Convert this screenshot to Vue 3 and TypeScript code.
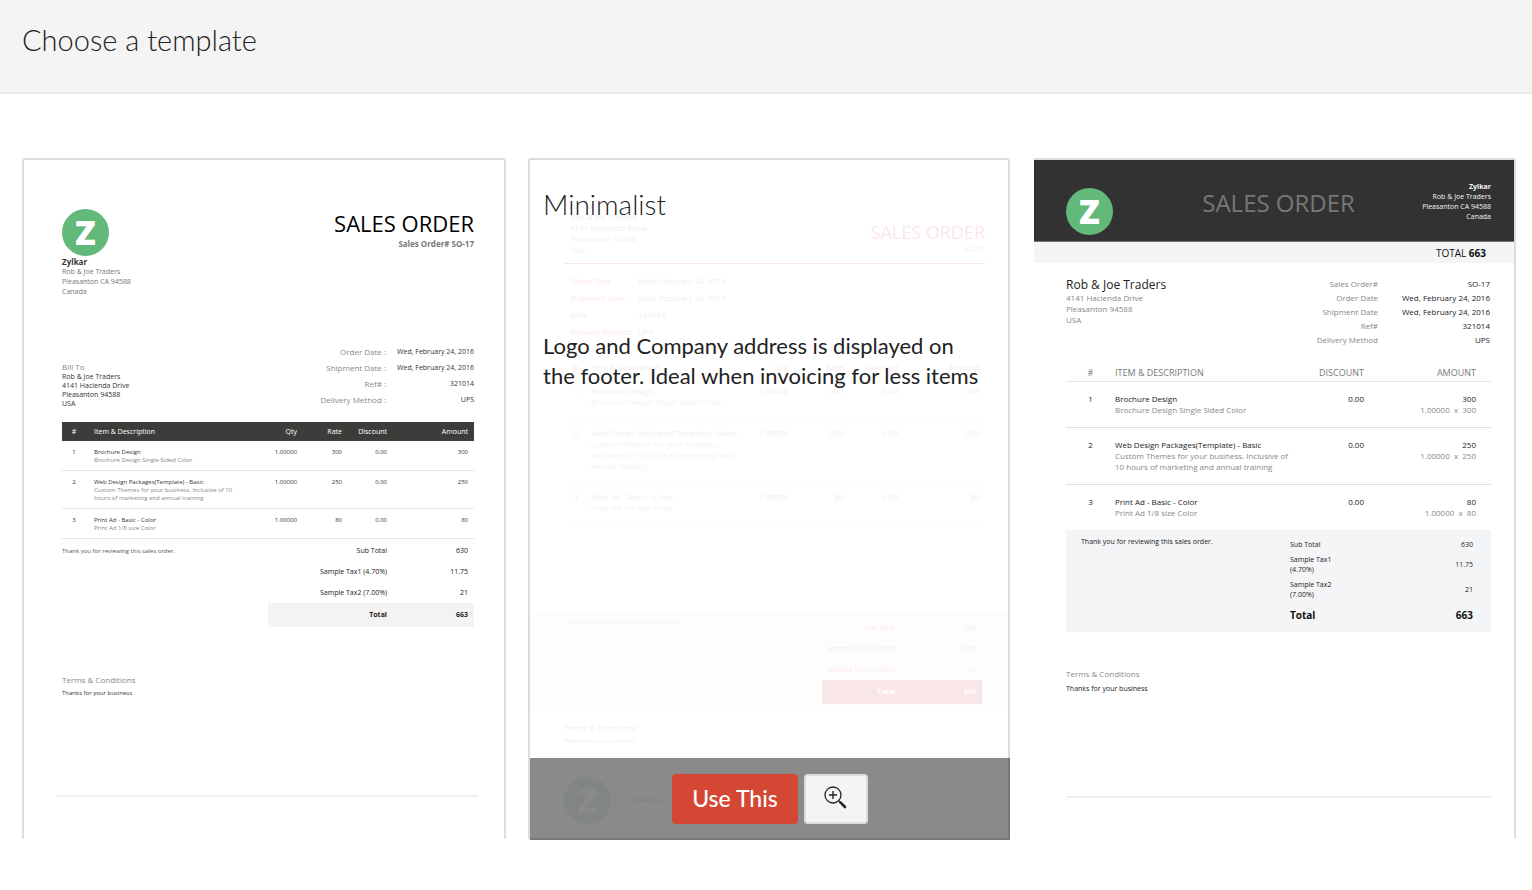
<script setup lang="ts">
interface Item {
  name: string
  text: string
  qty: string
  rate: string
  discount: string
}

interface Pair {
  label: string
  value: string
}

const items: Item[] = [
  { name: 'Brochure Design', text: 'Brochure Design Single Sided Color', qty: '1.00000', rate: '300', discount: '0.00' },
  {
    name: 'Web Design Packages(Template) - Basic',
    text: 'Custom Themes for your business. Inclusive of 10 hours of marketing and annual training',
    qty: '1.00000',
    rate: '250',
    discount: '0.00',
  },
  { name: 'Print Ad - Basic - Color', text: 'Print Ad 1/8 size Color', qty: '1.00000', rate: '80', discount: '0.00' },
]

const meta: Pair[] = [
  { label: 'Order Date', value: 'Wed, February 24, 2016' },
  { label: 'Shipment Date', value: 'Wed, February 24, 2016' },
  { label: 'Ref#', value: '321014' },
  { label: 'Delivery Method', value: 'UPS' },
]

const metaWithNumber: Pair[] = [{ label: 'Sales Order#', value: 'SO-17' }, ...meta]

const totals: Pair[] = [
  { label: 'Sub Total', value: '630' },
  { label: 'Sample Tax1 (4.70%)', value: '11.75' },
  { label: 'Sample Tax2 (7.00%)', value: '21' },
]

const company: string[] = ['Rob & Joe Traders', 'Pleasanton CA 94588', 'Canada']
const address: string[] = ['4141 Hacienda Drive', 'Pleasanton 94588', 'USA']
</script>

<template>
  <div class="page">
    <header class="page-head">
      <h1>Choose a template</h1>
    </header>

    <main class="gallery">
      <article class="card standard">
        <div class="doc">
          <div class="top">
            <div>
              <div class="logo">Z</div>
              <p class="company">Zylkar</p>
              <p v-for="line in company" :key="line" class="company-line">{{ line }}</p>
            </div>
            <div class="heading">
              <h2>SALES ORDER</h2>
              <p>Sales Order# SO-17</p>
            </div>
          </div>
          <div class="parties">
            <div class="bill">
              <p class="bill-label">Bill To</p>
              <p>Rob &amp; Joe Traders</p>
              <p v-for="line in address" :key="line">{{ line }}</p>
            </div>
            <dl class="meta">
              <template v-for="row in meta" :key="row.label">
                <dt>{{ row.label }} :</dt>
                <dd>{{ row.value }}</dd>
              </template>
            </dl>
          </div>
          <table>
            <thead>
              <tr>
                <th class="num">#</th>
                <th class="item">Item &amp; Description</th>
                <th class="qty">Qty</th>
                <th class="rate">Rate</th>
                <th class="disc">Discount</th>
                <th class="amount">Amount</th>
              </tr>
            </thead>
            <tbody>
              <tr v-for="(item, i) in items" :key="item.name">
                <td class="num">{{ i + 1 }}</td>
                <td class="item">{{ item.name }}<p>{{ item.text }}</p></td>
                <td class="qty">{{ item.qty }}</td>
                <td class="rate">{{ item.rate }}</td>
                <td class="disc">{{ item.discount }}</td>
                <td class="amount">{{ item.rate }}</td>
              </tr>
            </tbody>
          </table>
          <div class="summary">
            <p class="note">Thank you for reviewing this sales order.</p>
            <dl class="totals">
              <div v-for="row in totals" :key="row.label">
                <dt>{{ row.label }}</dt>
                <dd>{{ row.value }}</dd>
              </div>
              <div class="grand">
                <dt>Total</dt>
                <dd>663</dd>
              </div>
            </dl>
          </div>
          <div class="terms">
            <h3>Terms &amp; Conditions</h3>
            <p>Thanks for your business</p>
          </div>
          <hr />
        </div>
      </article>

      <article class="card minimalist">
        <div class="doc">
          <div class="top">
            <div class="bill">
              <p class="accent">Bill To</p>
              <p>Rob &amp; Joe Traders</p>
              <p v-for="line in address" :key="line">{{ line }}</p>
            </div>
            <div class="heading">
              <h2>SALES ORDER</h2>
              <p>SO-17</p>
            </div>
          </div>
          <dl class="meta">
            <template v-for="row in meta" :key="row.label">
              <dt>{{ row.label }}</dt>
              <dd>{{ row.value }}</dd>
            </template>
          </dl>
          <table>
            <thead>
              <tr>
                <th class="num">#</th>
                <th class="item">Item &amp; Description</th>
                <th class="qty">Qty</th>
                <th class="rate">Rate</th>
                <th class="disc">Discount</th>
                <th class="amount">Amount</th>
              </tr>
            </thead>
            <tbody>
              <tr v-for="(item, i) in items" :key="item.name">
                <td class="num">{{ i + 1 }}</td>
                <td class="item">{{ item.name }}<p>{{ item.text }}</p></td>
                <td class="qty">{{ item.qty }}</td>
                <td class="rate">{{ item.rate }}</td>
                <td class="disc">{{ item.discount }}</td>
                <td class="amount">{{ item.rate }}</td>
              </tr>
            </tbody>
          </table>
          <div class="summary">
            <p class="note">Thank you for reviewing this sales order.</p>
            <dl class="totals">
              <div v-for="row in totals" :key="row.label">
                <dt>{{ row.label }}</dt>
                <dd>{{ row.value }}</dd>
              </div>
              <div class="grand">
                <dt>Total</dt>
                <dd>663</dd>
              </div>
            </dl>
          </div>
          <div class="terms">
            <h3>Terms &amp; Conditions</h3>
            <p>Thanks for your business</p>
          </div>
          <div class="doc-foot">
            <div class="logo">Z</div>
            <p><b>Zylkar</b> Rob &amp; J</p>
          </div>
        </div>
        <div class="cover">
          <h2>Minimalist</h2>
          <p>Logo and Company address is displayed on the footer. Ideal when invoicing for less items</p>
        </div>
        <div class="actions">
          <button type="button" class="use">Use This</button>
          <button type="button" class="preview" aria-label="Preview">
            <svg width="24" height="24" viewBox="0 0 24 24" fill="none" stroke="#222" aria-hidden="true">
              <circle cx="9" cy="9" r="8" stroke-width="1.3" />
              <path d="M5 9h8M9 5v8" stroke-width="1.4" />
              <path d="M14.7 14.7l2 2" stroke-width="1.4" />
              <path d="M16.4 16.4l4.6 4.6" stroke-width="2.6" stroke-linecap="round" />
            </svg>
          </button>
        </div>
      </article>

      <article class="card elite">
        <div class="doc">
          <div class="banner">
            <div class="logo">Z</div>
            <h2>SALES ORDER</h2>
            <div class="sender">
              <p class="company">Zylkar</p>
              <p v-for="line in company" :key="line">{{ line }}</p>
            </div>
          </div>
          <p class="total-band">TOTAL <b>663</b></p>
          <div class="sheet">
            <div class="parties">
              <div class="bill">
                <p class="client">Rob &amp; Joe Traders</p>
                <p v-for="line in address" :key="line">{{ line }}</p>
              </div>
              <dl class="meta">
                <template v-for="row in metaWithNumber" :key="row.label">
                  <dt>{{ row.label }}</dt>
                  <dd>{{ row.value }}</dd>
                </template>
              </dl>
            </div>
            <table>
              <thead>
                <tr>
                  <th class="num">#</th>
                  <th class="item">ITEM &amp; DESCRIPTION</th>
                  <th class="disc">DISCOUNT</th>
                  <th class="amount">AMOUNT</th>
                </tr>
              </thead>
              <tbody>
                <tr v-for="(item, i) in items" :key="item.name">
                  <td class="num">{{ i + 1 }}</td>
                  <td class="item">{{ item.name }}<p>{{ item.text }}</p></td>
                  <td class="disc">{{ item.discount }}</td>
                  <td class="amount">{{ item.rate }}<p>{{ item.qty }}&nbsp; x &nbsp;{{ item.rate }}</p></td>
                </tr>
              </tbody>
            </table>
            <div class="summary">
              <p class="note">Thank you for reviewing this sales order.</p>
              <dl class="totals">
                <div v-for="row in totals" :key="row.label">
                  <dt>{{ row.label }}</dt>
                  <dd>{{ row.value }}</dd>
                </div>
                <div class="grand">
                  <dt>Total</dt>
                  <dd>663</dd>
                </div>
              </dl>
            </div>
            <div class="terms">
              <h3>Terms &amp; Conditions</h3>
              <p>Thanks for your business</p>
            </div>
            <hr />
          </div>
        </div>
      </article>
    </main>
  </div>
</template>

<style>
body {
  margin: 0;
  background: #fff;
}
</style>

<style scoped>
.page {
  font-family: Lato, "Open Sans", sans-serif;
  color: #222;
}

h1,
h2,
h3,
p,
dl,
dd,
hr {
  margin: 0;
  font-weight: 400;
}

.page-head {
  padding: 22px 22px 34px;
  background: #f4f4f4;
  border-bottom: 2px solid #ececec;
}

.page-head h1 {
  font-size: 29px;
  line-height: 36px;
  font-weight: 300;
}

.gallery {
  display: grid;
  grid-template-columns: minmax(0, 242fr) minmax(0, 241fr) minmax(0, 242fr);
  gap: 22px;
  padding: 64px 16px 50px 22px;
}

.card {
  position: relative;
  border: 2px solid #dcdcdc;
  border-bottom-color: transparent;
  border-radius: 3px;
}

.doc {
  font-family: "Open Sans", "Noto Sans", sans-serif;
  font-size: 8px;
  line-height: 11px;
  color: #333;
}

.logo {
  width: 47px;
  height: 47px;
  border-radius: 50%;
  background: #62b97a;
  color: #fff;
  font-size: 34px;
  line-height: 46px;
  font-weight: 800;
  text-align: center;
}

.top,
.parties,
.summary {
  display: flex;
  justify-content: space-between;
}

.heading {
  text-align: right;
}

table {
  width: 100%;
  table-layout: fixed;
  border-collapse: separate;
  border-spacing: 0;
}

th,
td {
  padding: 0;
  font-weight: 400;
  text-align: right;
  vertical-align: top;
}

th.item,
td.item {
  text-align: left;
}

td p {
  color: #888;
}

.totals > div {
  display: flex;
  align-items: center;
  justify-content: flex-end;
  text-align: right;
}

hr {
  height: 2px;
  border: 0;
  background: #f0f0f0;
}

/* Standard template */
.standard .doc {
  padding: 49px 30px 0 38px;
}

.standard .company {
  margin-top: 1px;
  font-size: 8px;
  line-height: 10px;
  font-weight: 700;
}

.standard .company-line {
  font-size: 7px;
  line-height: 10px;
  color: #777;
}

.standard .heading h2 {
  margin-top: 2px;
  font-size: 22px;
  line-height: 24px;
  color: #000;
}

.standard .heading p {
  margin-top: 4px;
  font-size: 8px;
  line-height: 10px;
  font-weight: 700;
  color: #777;
}

.standard .parties {
  align-items: flex-end;
  margin: 47px 0 14px;
}

.standard .bill {
  font-size: 7px;
  line-height: 9px;
}

.standard .bill-label {
  font-size: 8px;
  line-height: 10px;
  color: #888;
}

.standard .meta {
  display: grid;
  grid-template-columns: auto 88px;
  line-height: 16px;
  text-align: right;
}

.standard .meta dt {
  color: #888;
}

.standard .meta dd {
  font-size: 7px;
}

.standard th {
  background: #3c3d3a;
  color: #fff;
  font-size: 7px;
  line-height: 19px;
}

.standard td {
  padding: 7px 0 6px;
  border-bottom: 1px solid #e6e6e6;
  font-size: 6px;
  line-height: 8px;
}

.standard .num {
  width: 24px;
  text-align: center;
}

.standard .item {
  padding-left: 8px;
  padding-right: 4px;
}

.standard .qty {
  width: 50px;
}

.standard .rate,
.standard .disc {
  width: 45px;
}

.standard .amount {
  width: 81px;
  padding-right: 6px;
}

.standard .summary {
  padding-top: 1px;
}

.standard .note {
  font-size: 6px;
  line-height: 22px;
  color: #555;
}

.standard .totals {
  width: 50%;
  font-size: 7px;
  line-height: 21px;
  color: #222;
}

.standard .totals dd {
  width: 81px;
  padding-right: 6px;
}

.standard .grand {
  background: #f4f3f2;
  line-height: 24px;
}

.grand dt,
.grand dd {
  font-weight: 700;
}

.standard .terms {
  padding-top: 47px;
}

.terms h3 {
  font-size: 8px;
  line-height: 12px;
  color: #888;
}

.terms p {
  line-height: 14px;
}

.standard .terms p {
  font-size: 6px;
}

.standard hr {
  margin: 95px -4px 41px -5px;
}

/* Minimalist template, faded behind its description */
.minimalist {
  border-bottom-color: #dcdcdc;
}

.minimalist .doc {
  padding: 40px 23px 0 34px;
  opacity: 0.1;
  color: #666;
}

.minimalist .top {
  padding: 0 0 8px 6px;
  border-bottom: 1px solid #c8201f;
}

.minimalist .heading h2,
.minimalist .accent,
.minimalist .terms h3,
.minimalist dt,
.minimalist th {
  color: #c8201f;
}

.minimalist .heading h2 {
  margin-top: 21px;
  font-size: 18px;
  line-height: 22px;
}

.minimalist .heading p {
  line-height: 12px;
}

.minimalist .meta {
  display: grid;
  grid-template-columns: 68px auto;
  padding: 8px 0 16px 6px;
  line-height: 17px;
}

.minimalist th {
  line-height: 22px;
}

.minimalist td {
  padding: 7px 0 12px;
  border-bottom: 1px solid #eee;
}

.minimalist .num {
  width: 14px;
}

.minimalist .item {
  padding-left: 13px;
  padding-right: 4px;
}

.minimalist .qty {
  width: 40px;
}

.minimalist .rate,
.minimalist .disc {
  width: 55px;
}

.minimalist .amount {
  width: 81px;
  padding-right: 6px;
}

.minimalist .summary {
  margin: 86px -23px 0 -34px;
  padding: 5px 26px 5px 40px;
  background: #f4f4f4;
}

.minimalist .note {
  font-size: 6px;
}

.minimalist .totals {
  width: 160px;
  font-size: 7px;
  line-height: 21px;
}

.minimalist .totals dd {
  width: 81px;
  padding-right: 6px;
}

.minimalist .grand {
  background: #c8201f;
  line-height: 24px;
}

.minimalist .grand dt,
.minimalist .grand dd {
  color: #fff;
}

.minimalist .terms {
  padding-top: 13px;
}

.minimalist .terms p {
  font-size: 6px;
}

.doc-foot {
  display: flex;
  align-items: center;
  gap: 22px;
  margin-top: 17px;
  padding-top: 11px;
  border-top: 1px solid #999;
  font-size: 6px;
}

.cover {
  position: absolute;
  inset: 0;
  padding: 26px 20px 26px 13px;
}

.cover h2 {
  font-size: 28px;
  line-height: 36px;
  font-weight: 300;
}

.cover p {
  margin-top: 109px;
  font-size: 22px;
  line-height: 30px;
}

.actions {
  position: absolute;
  left: 0;
  right: -2px;
  bottom: -2px;
  display: flex;
  justify-content: center;
  gap: 6px;
  padding: 16px 0;
  background: rgba(0, 0, 0, 0.46);
}

.actions button {
  height: 50px;
  box-sizing: border-box;
  border-radius: 4px;
  font-family: inherit;
  font-size: 23px;
}

.actions .use {
  padding: 0 20px 2px;
  border: 0;
  background: #d44735;
  color: #fff;
  font-weight: 500;
}

.preview {
  display: flex;
  align-items: center;
  justify-content: center;
  width: 64px;
  padding: 0 0 2px;
  border: 2px solid #dcdcdc;
  background: #f4f4f4;
}

/* Dark banner template */
.elite {
  border-left-color: transparent;
}

.banner {
  display: flex;
  justify-content: space-between;
  padding: 22px 23px 6px 32px;
  background: #323232;
  border-bottom: 1px solid #777;
  color: #f4f4f4;
}

.banner .logo {
  margin-top: 6px;
}

.banner h2 {
  margin: 6px 0 0 22px;
  font-size: 24px;
  line-height: 30px;
  color: #777;
}

.sender {
  font-size: 7px;
  line-height: 10px;
  text-align: right;
}

.sender .company {
  font-weight: 700;
}

.total-band {
  padding: 1px 28px 0 0;
  background: #f4f5f7;
  color: #111;
  font-size: 10px;
  line-height: 20px;
  text-align: right;
}

.sheet {
  padding: 14px 23px 0 32px;
}

.elite .bill {
  color: #888;
}

.elite .client {
  font-size: 12px;
  line-height: 15px;
  color: #222;
}

.elite .meta {
  display: grid;
  grid-template-columns: auto 112px;
  padding-right: 1px;
  line-height: 14px;
  text-align: right;
}

.elite .meta dt {
  color: #888;
}

.elite .meta dd {
  color: #222;
}

.elite table {
  margin-top: 17px;
}

.elite th {
  border-bottom: 1px solid #e6e6e6;
  font-size: 9px;
  line-height: 17px;
  color: #777;
}

.elite td {
  padding: 11px 0 12px;
  border-bottom: 1px solid #e0e0e0;
  color: #222;
}

.elite tbody tr:last-child td {
  border-bottom: 0;
}

.elite .num {
  width: 49px;
  text-align: center;
}

.elite .item {
  padding-right: 1px;
}

.elite .disc {
  width: 68px;
}

.elite .amount {
  width: 112px;
  padding-right: 15px;
}

.elite .summary {
  padding: 7px 18px 5px 15px;
  background: #f4f5f7;
  color: #222;
  font-size: 7px;
  line-height: 10px;
}

.elite .totals > div {
  justify-content: space-between;
  height: 25px;
}

.elite .totals {
  width: 183px;
}

.elite .totals > div:first-child {
  height: 15px;
}

.elite .totals dt {
  width: 56px;
  text-align: left;
}

.elite .totals .grand {
  font-size: 10px;
  color: #111;
}

.elite .terms {
  padding-top: 36px;
}

.elite .terms p {
  font-size: 7px;
  line-height: 18px;
  color: #222;
}

.elite hr {
  margin-top: 98px;
}
</style>
